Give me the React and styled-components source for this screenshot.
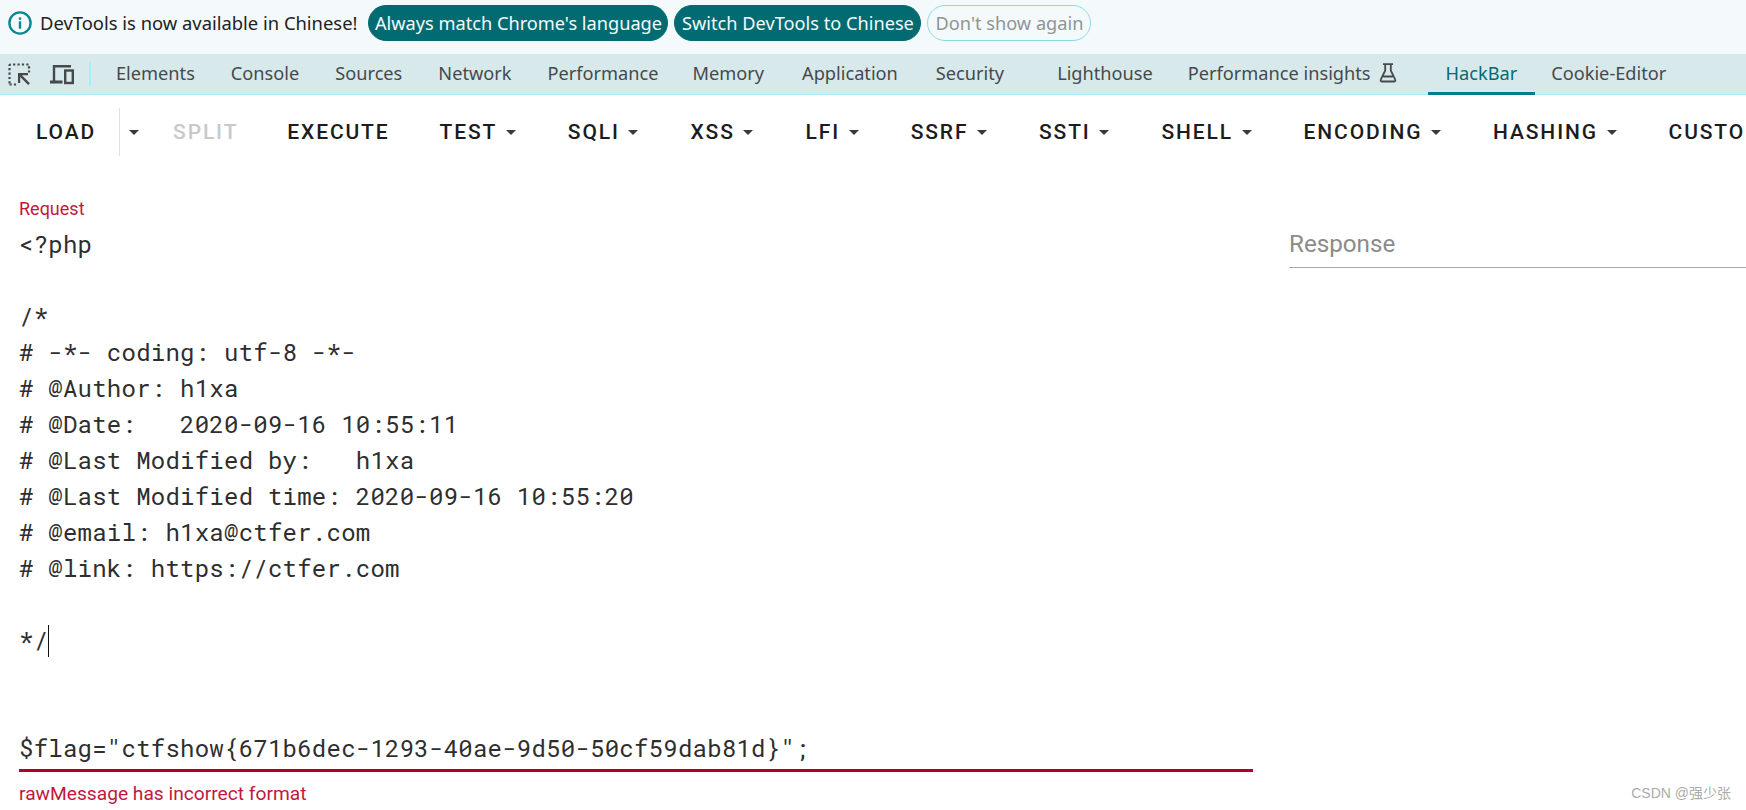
import React from 'react';
import styled, { createGlobalStyle } from 'styled-components';

const GlobalStyle = createGlobalStyle`
  html, body {
    margin: 0;
    padding: 0;
    background: #fff;
    overflow: hidden;
  }
`;

const Page = styled.div`
  position: relative;
  width: 1746px;
  height: 810px;
  overflow: hidden;
  background: #fff;
  font-family: 'Roboto', sans-serif;
`;

const InfoBar = styled.div`
  height: 54px;
  box-sizing: border-box;
  padding: 5px 0 13px 7px;
  display: flex;
  align-items: center;
  background: #f4fafb;
  font-family: 'Noto Sans', sans-serif;
`;

const InfoText = styled.span`
  margin: 0 11px 0 7px;
  line-height: 36px;
  font-size: 18.4px;
  color: #202124;
  white-space: nowrap;
`;

const Pill = styled.button`
  height: 36px;
  box-sizing: border-box;
  width: ${(p) => p.$width}px;
  margin-right: 6px;
  padding: 0;
  border-radius: 18px;
  border: 1px solid ${(p) => (p.$ghost ? '#8adbe6' : '#026b72')};
  background: ${(p) => (p.$ghost ? 'transparent' : '#026b72')};
  color: ${(p) => (p.$ghost ? '#8f9496' : '#f2fbfb')};
  font: inherit;
  font-size: 18.2px;
  white-space: nowrap;
`;

const TabBar = styled.div`
  height: 41px;
  box-sizing: border-box;
  display: flex;
  align-items: stretch;
  background: #d8e9eb;
  border-bottom: 1px solid #a0f3fb;
  font-family: 'Noto Sans', sans-serif;
`;

const ToolIcons = styled.div`
  width: 91px;
  box-sizing: border-box;
  padding: 0 0 0 8px;
  display: flex;
  align-items: center;
  gap: 19px;
  border-right: 2px solid #a0f3fb;
  margin: 8px 0;
`;

const Tab = styled.div`
  display: flex;
  align-items: center;
  gap: 8px;
  padding: 0 ${(p) => p.$padRight ?? 18}px 0 ${(p) => p.$padLeft ?? 18}px;
  margin-bottom: -1px;
  font-size: 18.2px;
  color: ${(p) => (p.$active ? '#006b73' : '#45494c')};
  border-bottom: 3px solid ${(p) => (p.$active ? '#007f8a' : 'transparent')};
  box-sizing: border-box;
  white-space: nowrap;
`;

const TabList = styled.div`
  display: flex;
  margin-left: 7px;
`;

const Toolbar = styled.div`
  height: 48px;
  margin-top: 13px;
  padding-left: 10px;
  display: flex;
  align-items: center;
  overflow: hidden;
`;

const ToolButton = styled.div`
  flex: none;
  display: flex;
  align-items: center;
  height: 100%;
  padding: 0 ${(p) => p.$padRight ?? 26}px 0 26px;
  font-size: 21px;
  font-weight: 500;
  letter-spacing: 1.87px;
  color: ${(p) => (p.$disabled ? '#c9c9c9' : '#1c1c1c')};
  white-space: nowrap;
`;

const LoadButton = styled(ToolButton)`
  padding-right: 23px;
  border-right: 1px solid #e0e0e0;
`;

const LoadMenu = styled.div`
  flex: none;
  width: 27px;
  display: flex;
  justify-content: center;
`;

const Caret = styled.span`
  display: inline-block;
  width: 0;
  height: 0;
  margin-left: ${(p) => p.$gap ?? 8.7}px;
  border-left: 5.9px solid transparent;
  border-right: 5.9px solid transparent;
  border-top: 5.9px solid #3a3a3a;
`;

const Workspace = styled.div`
  display: flex;
  align-items: flex-start;
  padding-left: 19px;
`;

const RequestField = styled.div`
  width: 1234px;
  margin-top: 43px;
  flex: none;
`;

const FieldLabel = styled.div`
  height: 20px;
  line-height: 20px;
  font-size: 18px;
  color: #c2183c;
`;

const CodeArea = styled.pre`
  margin: 7px 0 0;
  padding: 0 0 3px;
  border-bottom: 3px solid #b0002a;
  font-family: 'Roboto Mono', 'Noto Sans Mono', 'DejaVu Sans Mono', monospace;
  font-size: 24px;
  font-weight: 370;
  line-height: 36px;
  letter-spacing: 0.24px;
  color: #2e2e2e;
`;

const TextCaret = styled.span`
  display: inline-block;
  width: 0;
  height: 32px;
  margin-left: -0.5px;
  vertical-align: -8px;
  border-left: 1.5px solid #111;
`;

const HelperText = styled.div`
  margin-top: 12px;
  font-size: 19.2px;
  line-height: 20px;
  color: #c2183c;
`;

const ResponseField = styled.div`
  flex: 1;
  margin: 72px 0 0 36px;
  height: 40px;
  box-sizing: border-box;
  font-size: 24.2px;
  line-height: 32px;
  color: #8b8b8b;
  border-bottom: 1px solid #a8a8a8;
`;

const Watermark = styled.div`
  position: absolute;
  right: 15px;
  bottom: 8px;
  font-family: 'Liberation Sans', 'Noto Sans CJK SC', sans-serif;
  font-size: 14px;
  line-height: 18px;
  color: #ababab;
`;

const InfoIcon = () => (
  <svg width="26" height="26" viewBox="0 0 26 26" fill="none">
    <circle cx="13" cy="13" r="10.6" stroke="#0b8793" strokeWidth="2.4" />
    <rect x="11.8" y="11.3" width="2.4" height="7.4" fill="#0b8793" />
    <rect x="11.8" y="7.4" width="2.4" height="2.4" fill="#0b8793" />
  </svg>
);

const InspectIcon = () => (
  <svg width="23" height="23" viewBox="0 0 23 23" fill="none">
    <path d="M1.5 20.5v-18a1 1 0 0 1 1-1h18.500v8" stroke="#45494c" strokeWidth="2.200" strokeDasharray="2.200 2.200" />
    <path d="M1.500 21.500h7" stroke="#45494c" strokeWidth="2.200" strokeDasharray="2.200 2.200" />
    <path d="M10 10h10v2.300h-6.100l8 8-1.700 1.700-8-8v6.100H10z" fill="#45494c" />
  </svg>
);

const DeviceIcon = () => (
  <svg width="24" height="21" viewBox="0 0 24 21" fill="none">
    <path d="M4 17V2.200h17" stroke="#45494c" strokeWidth="2.400" />
    <rect x="0" y="16.500" width="12.500" height="3" fill="#45494c" />
    <rect x="15.200" y="6.500" width="7.600" height="12.500" stroke="#45494c" strokeWidth="2.400" />
  </svg>
);

const FlaskIcon = () => (
  <svg width="18" height="20" viewBox="0 0 18 20" fill="none">
    <path d="M4 1.200h10M6.200 1.500v6L1.800 16.600a1.300 1.300 0 0 0 1.200 1.900h12a1.300 1.300 0 0 0 1.200-1.900L11.800 7.500v-6M4.300 13.500h9.400" stroke="#45494c" strokeWidth="1.800" />
  </svg>
);

const menus = [
  { label: 'TEST', caret: true },
  { label: 'SQLI', caret: true },
  { label: 'XSS', caret: true },
  { label: 'LFI', caret: true },
  { label: 'SSRF', caret: true },
  { label: 'SSTI', caret: true },
  { label: 'SHELL', caret: true },
  { label: 'ENCODING', caret: true },
  { label: 'HASHING', caret: true },
  { label: 'CUSTOM' },
];

const code = `<?php

/*
# -*- coding: utf-8 -*-
# @Author: h1xa
# @Date:   2020-09-16 10:55:11
# @Last Modified by:   h1xa
# @Last Modified time: 2020-09-16 10:55:20
# @email: h1xa@ctfer.com
# @link: https://ctfer.com

*/`;

const App = () => (
  <Page>
    <GlobalStyle />
    <InfoBar>
      <InfoIcon />
      <InfoText>DevTools is now available in Chinese!</InfoText>
      <Pill $width={300}>Always match Chrome's language</Pill>
      <Pill $width={247}>Switch DevTools to Chinese</Pill>
      <Pill $width={164} $ghost>Don't show again</Pill>
    </InfoBar>
    <TabBar>
      <ToolIcons>
        <InspectIcon />
        <DeviceIcon />
      </ToolIcons>
      <TabList>
        <Tab>Elements</Tab>
        <Tab>Console</Tab>
        <Tab>Sources</Tab>
        <Tab>Network</Tab>
        <Tab $padRight={16}>Performance</Tab>
        <Tab $padRight={20}>Memory</Tab>
        <Tab $padRight={20}>Application</Tab>
        <Tab $padRight={35}>Security</Tab>
        <Tab $padRight={17}>Lighthouse</Tab>
        <Tab $padRight={31}>
          Performance insights <FlaskIcon />
        </Tab>
        <Tab $active>HackBar</Tab>
        <Tab $padLeft={16}>Cookie-Editor</Tab>
      </TabList>
    </TabBar>
    <Toolbar>
      <LoadButton>LOAD</LoadButton>
      <LoadMenu>
        <Caret $gap={0} />
      </LoadMenu>
      <ToolButton $disabled $padRight={23}>SPLIT</ToolButton>
      <ToolButton $padRight={24}>EXECUTE</ToolButton>
      {menus.map((m) => (
        <ToolButton key={m.label}>
          {m.label}
          {m.caret && <Caret />}
        </ToolButton>
      ))}
    </Toolbar>
    <Workspace>
      <RequestField>
        <FieldLabel>Request</FieldLabel>
        <CodeArea>
          {code}
          <TextCaret />
          {'\n\n\n'}
          {'$flag="ctfshow{671b6dec-1293-40ae-9d50-50cf59dab81d}";'}
        </CodeArea>
        <HelperText>rawMessage has incorrect format</HelperText>
      </RequestField>
      <ResponseField>Response</ResponseField>
    </Workspace>
    <Watermark>CSDN @强少张</Watermark>
  </Page>
);

export default App;
